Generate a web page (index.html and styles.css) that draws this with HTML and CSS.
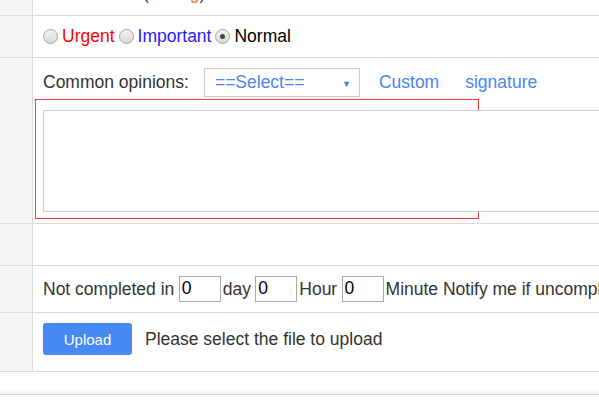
FILE: index.html
```html
<!DOCTYPE html>
<html>
<head>
<meta charset="utf-8">
<link rel="stylesheet" href="styles.css">
</head>
<body>
<div class="form">
  <div class="row row-top">
    <div class="side"></div>
    <div class="cell cell-top"><span class="paren">(</span><span class="warn">Rating</span><span class="paren">)</span></div>
  </div>
  <div class="row row-level">
    <div class="side"></div>
    <div class="cell cell-mid">
      <label class="opt"><span class="radio"></span><span class="urgent">Urgent</span></label>
      <label class="opt"><span class="radio"></span><span class="important">Important</span></label>
      <label class="opt"><span class="radio checked"></span><span class="normal">Normal</span></label>
    </div>
  </div>
  <div class="row row-opinion">
    <div class="side"></div>
    <div class="cell cell-opinion">
      <div class="opinion-bar">
        <span class="label">Common opinions:</span>
        <div class="select"><span>==Select==</span><span class="arrow">▼</span></div>
        <a class="link link-custom">Custom</a>
        <a class="link">signature</a>
      </div>
      <div class="error-box">
        <div class="textarea"></div>
      </div>
    </div>
  </div>
  <div class="row row-empty">
    <div class="side"></div>
    <div class="cell"></div>
  </div>
  <div class="row row-remind">
    <div class="side"></div>
    <div class="cell cell-remind">Not completed in <span class="num">0</span>day <span class="num">0</span>Hour <span class="num">0</span>Minute Notify me if uncompleted</div>
  </div>
  <div class="row row-upload">
    <div class="side"></div>
    <div class="cell cell-upload">
      <button class="btn">Upload</button>
      <span class="hint">Please select the file to upload</span>
    </div>
  </div>
  <div class="footer"></div>
</div>
</body>
</html>
```
FILE: styles.css
```css
html, body {
  margin: 0;
  padding: 0;
  background: #fff;
  overflow: hidden;
  width: 599px;
  height: 400px;
}
body {
  font-family: "Liberation Sans", Arial, sans-serif;
  font-size: 17.5px;
  color: #333;
}
.form {
  margin-top: -26px;
}
.row {
  display: grid;
  grid-template-columns: 33px 1fr;
  border-bottom: 1px solid #dcdcdc;
}
.side {
  background: #f5f5f5;
  border-right: 1px solid #dcdcdc;
}
.cell {
  padding: 0 0 0 10px;
  min-width: 0;
  overflow: visible;
}
.row-top { height: 41px; }
.row-level { height: 41px; }
.row-opinion { height: 165px; }
.row-empty { height: 41px; }
.row-remind { height: 46px; }
.row-upload { height: 58px; }

.cell-top {
  padding-left: 110px;
  padding-top: 9px;
  line-height: 20px;
}
.paren { color: #2b3fd0; }
.warn { color: #f07a2a; }

.cell-mid {
  display: flex;
  align-items: center;
}

.opt {
  display: inline-flex;
  align-items: center;
  margin-right: 4px;
}
.radio {
  width: 13px;
  height: 13px;
  border-radius: 50%;
  border: 1px solid #a6a6a6;
  background: linear-gradient(#f4f4f4, #d8d8d8);
  margin-right: 4px;
  display: inline-flex;
  align-items: center;
  justify-content: center;
  box-sizing: content-box;
}
.radio.checked::after {
  content: "";
  width: 5px;
  height: 5px;
  border-radius: 50%;
  background: #444;
}
.urgent { color: #ff0000; }
.important { color: #2020ff; }
.normal { color: #000; }

.cell-opinion {
  padding-top: 10px;
}
.opinion-bar {
  display: flex;
  align-items: center;
  height: 29px;
}
.label { margin-right: 15px; }
.select {
  border: 1px solid #cccccc;
  display: flex;
  align-items: center;
  justify-content: space-between;
  padding: 0 8px 0 10px;
  box-sizing: border-box;
  width: 156px;
  height: 29px;
  color: #4a86f0;
  margin-right: 19px;
}
.arrow {
  font-size: 9px;
  color: #3e7ee8;
  margin-top: 2px;
}
.link {
  color: #4a86f0;
  cursor: pointer;
}
.link-custom { margin-right: 26px; }

.error-box {
  margin-top: 2px;
  margin-left: -8px;
  width: 444px;
  height: 120px;
  border: 1px solid #f03c3c;
  padding: 10px 0 0 7px;
  box-sizing: border-box;
}
.textarea {
  width: 600px;
  height: 102px;
  border: 1px solid #cccccc;
  box-sizing: border-box;
  background: #fff;
}

.cell-remind {
  white-space: nowrap;
  line-height: 46px;
}
.num {
  display: inline-block;
  vertical-align: middle;
  width: 42px;
  height: 26px;
  border: 1px solid #a9a9a9;
  box-sizing: border-box;
  padding: 0 2px;
  line-height: 22px;
  color: #000;
  margin: -2px 2px 0 -0.5px;
}

.cell-upload {
  display: flex;
  padding-top: 10px;
  align-items: flex-start;
}
.btn {
  width: 89px;
  height: 32px;
  background: #4689f5;
  color: #fff;
  border: none;
  border-radius: 3px;
  font-family: "Liberation Sans", Arial, sans-serif;
  font-size: 15px;
  margin-right: 13px;
}
.hint {
  line-height: 32px;
}

.footer {
  height: 22px;
  border-bottom: 1px solid #d4d4d4;
  background: linear-gradient(to bottom, #fff 0, #fff 17px, #f2f2f2 22px);
}
```
